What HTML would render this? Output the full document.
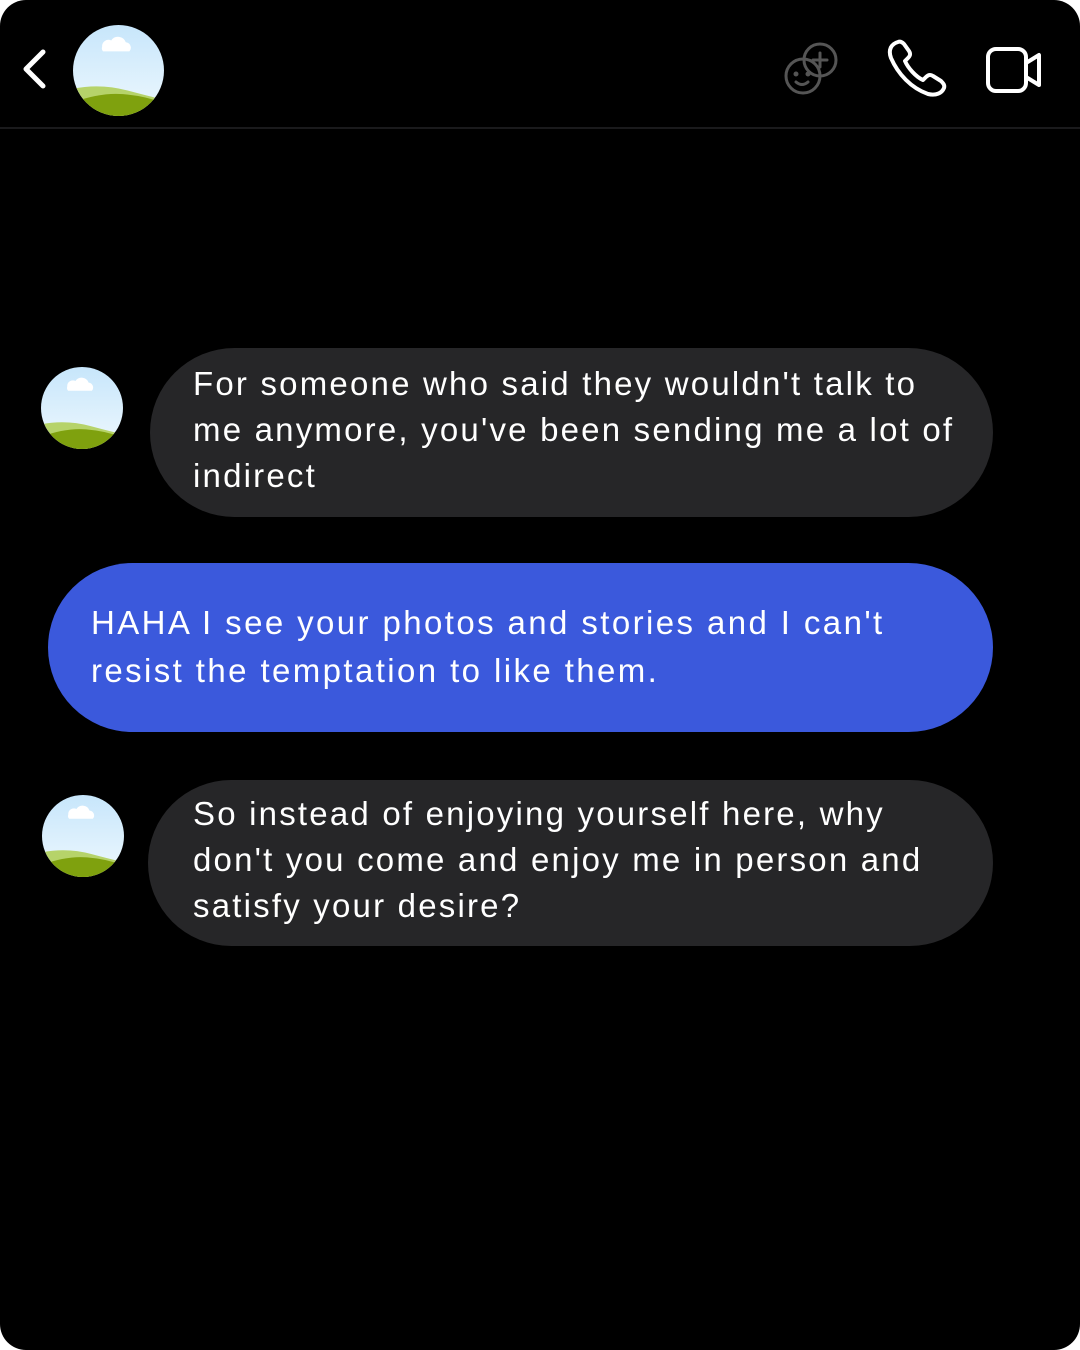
<!DOCTYPE html>
<html><head><style>
html,body{margin:0;padding:0;background:#fff;}
.wrap{position:relative;width:1080px;height:1350px;background:#000;border-radius:26px;overflow:hidden;font-family:"Liberation Sans",sans-serif;}
.hdr{position:absolute;left:0;top:127px;width:1080px;height:2px;background:#1a1a1c;}
.b{position:absolute;color:#fff;font-size:33px;letter-spacing:2.2px;line-height:46px;box-sizing:border-box;padding-left:43px;white-space:nowrap;}
.g{background:#262628;}
.bl{background:#3b59dc;}
.av{position:absolute;}
</style></head><body><div class="wrap">
<svg style="position:absolute;left:16px;top:46px" width="36" height="46" viewBox="0 0 36 46"><path d="M27 6 L10 23 L27 40" stroke="#fff" stroke-width="5" fill="none" stroke-linecap="round" stroke-linejoin="round"/></svg>
<svg width="0" height="0" style="position:absolute"><defs>
<clipPath id="c"><circle cx="50" cy="50" r="50"/></clipPath>
<linearGradient id="sky" x1="0" y1="0" x2="0" y2="1"><stop offset="0" stop-color="#c7e6fb"/><stop offset="1" stop-color="#eef8fe"/></linearGradient>
<g id="avg"><g clip-path="url(#c)"><rect width="100" height="100" fill="url(#sky)"/>
<path d="M0 70 Q30 64 60 72 T100 82 V100 H0Z" fill="#b6d36a"/>
<path d="M0 85 Q30 74 55 76 T100 86 V100 H0Z" fill="#7fa10e"/>
<path d="M32 24 a7 7 0 0 1 10 -7 a9 9 0 0 1 16 2 a6 6 0 0 1 4 10 H33 a5 5 0 0 1 -1 -5Z" fill="#fff"/></g></g></defs></svg>
<svg class="av" style="left:73px;top:25px" width="91" height="91" viewBox="0 0 100 100"><use href="#avg"/></svg>
<svg style="position:absolute;left:784px;top:42px" width="56" height="56" viewBox="0 0 56 56" fill="none" stroke="#555" stroke-width="3" stroke-linecap="round"><circle cx="19" cy="34" r="17"/><circle cx="36" cy="18" r="16"/><path d="M36 11v14M29 18h14"/><path d="M12 40q6 5 12 0"/><circle cx="12" cy="32" r="1" fill="#555"/><circle cx="24" cy="32" r="1" fill="#555"/></svg>
<svg style="position:absolute;left:886px;top:38px" width="62" height="60" viewBox="0 0 62 60" fill="none" stroke="#fff" stroke-width="4" stroke-linejoin="round"><path d="M12 4 C5 6 2 12 5 20 C12 36 25 50 42 56 C50 58 56 55 58 50 C59 47 57 45 55 43 L47 38 C44 36 42 37 40 39 L37 42 C30 39 22 30 19 23 L22 20 C24 18 25 16 23 13 L18 6 C16 4 14 3 12 4Z"/></svg>
<svg style="position:absolute;left:985px;top:45px" width="60" height="50" viewBox="0 0 60 50" fill="none" stroke="#fff" stroke-width="4" stroke-linejoin="round"><rect x="3" y="4" width="38" height="42" rx="8"/><path d="M41 18 L54 10 V40 L41 32"/></svg>
<div class="hdr"></div>
<svg class="av" style="left:41px;top:367px" width="82" height="82" viewBox="0 0 100 100"><use href="#avg"/></svg>
<div class="b g" style="left:150px;top:348px;width:843px;height:169px;border-radius:85px;padding-top:13px">For someone who said they wouldn't talk to<br>me anymore, you've been sending me a lot of<br>indirect</div>
<div class="b bl" style="left:48px;top:563px;width:945px;height:169px;border-radius:85px;padding-top:36px;line-height:48px;font-size:33px;letter-spacing:2.4px">HAHA I see your photos and stories and I can't<br>resist the temptation to like them.</div>
<svg class="av" style="left:42px;top:795px" width="82" height="82" viewBox="0 0 100 100"><use href="#avg"/></svg>
<div class="b g" style="left:148px;top:780px;width:845px;height:166px;border-radius:83px;padding-left:45px;padding-top:11px">So instead of enjoying yourself here, why<br>don't you come and enjoy me in person and<br>satisfy your desire?</div>
</div></body></html>
